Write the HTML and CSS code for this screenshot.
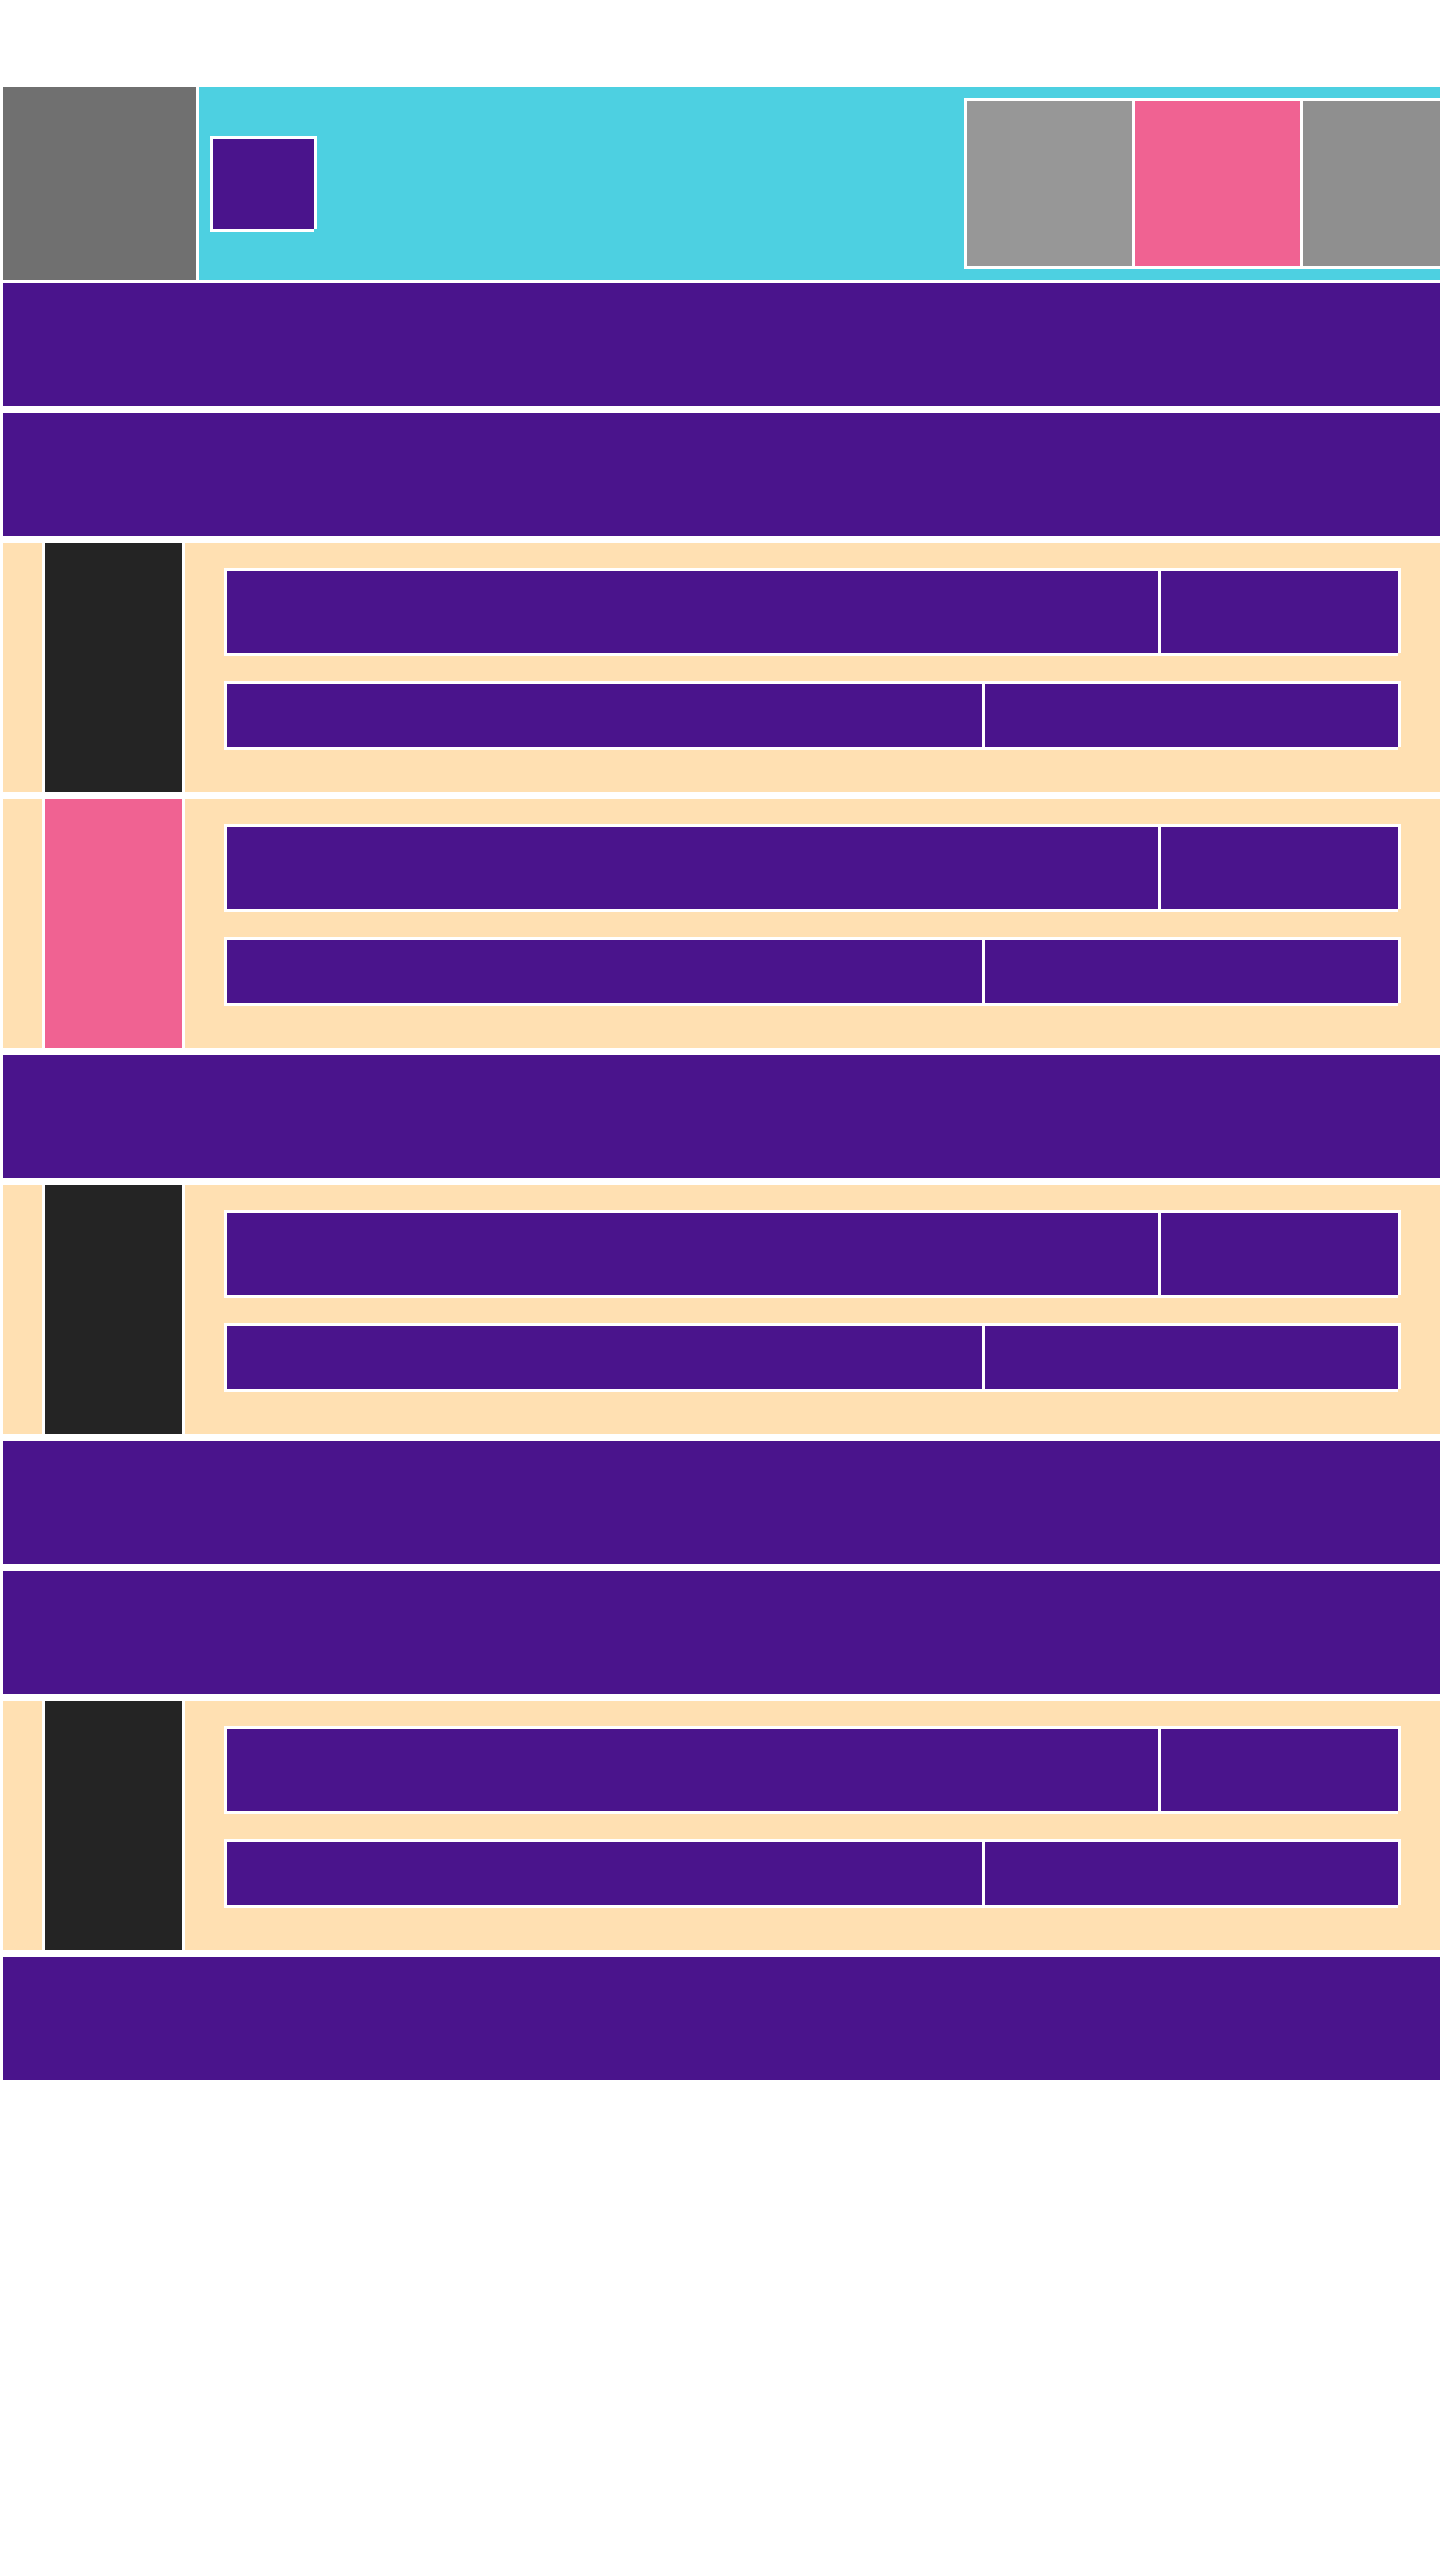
FILE: index.html
```html
<!DOCTYPE html>
<html lang="en">
<head>
<meta charset="utf-8">
<title>Layout</title>
<link rel="stylesheet" href="styles.css">
</head>
<body>
<div class="page">
  <header class="header">
    <div class="logo"></div>
    <div class="bar-top">
      <div class="brand framed"></div>
      <div class="tiles framed">
        <div class="tile tile-a"></div>
        <div class="tile tile-b"></div>
        <div class="tile tile-c"></div>
      </div>
    </div>
  </header>

  <section class="row band"></section>
  <section class="row band"></section>

  <section class="row card">
    <div class="card-edge"></div>
    <div class="card-media media-dark"></div>
    <div class="card-body">
      <div class="line line-1 framed"><div class="cell c-wide"></div><div class="cell c-narrow"></div></div>
      <div class="line line-2 framed"><div class="cell c-mid"></div><div class="cell c-rest"></div></div>
    </div>
  </section>

  <section class="row card">
    <div class="card-edge"></div>
    <div class="card-media media-pink"></div>
    <div class="card-body">
      <div class="line line-1 framed"><div class="cell c-wide"></div><div class="cell c-narrow"></div></div>
      <div class="line line-2 framed"><div class="cell c-mid"></div><div class="cell c-rest"></div></div>
    </div>
  </section>

  <section class="row band"></section>

  <section class="row card">
    <div class="card-edge"></div>
    <div class="card-media media-dark"></div>
    <div class="card-body">
      <div class="line line-1 framed"><div class="cell c-wide"></div><div class="cell c-narrow"></div></div>
      <div class="line line-2 framed"><div class="cell c-mid"></div><div class="cell c-rest"></div></div>
    </div>
  </section>

  <section class="row band"></section>
  <section class="row band"></section>

  <section class="row card">
    <div class="card-edge"></div>
    <div class="card-media media-dark"></div>
    <div class="card-body">
      <div class="line line-1 framed"><div class="cell c-wide"></div><div class="cell c-narrow"></div></div>
      <div class="line line-2 framed"><div class="cell c-mid"></div><div class="cell c-rest"></div></div>
    </div>
  </section>

  <section class="row band"></section>
</div>
</body>
</html>
```

FILE: styles.css
```css
html {
  overflow: hidden;
  background: #ffffff;
}

body {
  margin: 0;
  padding: 87px 0 0 3px;
  background: #ffffff;
  font-family: "Liberation Sans", Arial, sans-serif;
}

.page {
  width: 1479px;
  display: flex;
  flex-direction: column;
}

/* white frame with the bottom-right corner left open */
.framed {
  border-top: 3px solid #ffffff;
  border-left: 3px solid #ffffff;
  margin: 0 3px 3px 0;
  box-shadow: 3px 0 0 0 #ffffff, 0 3px 0 0 #ffffff;
}

.header {
  height: 193px;
  display: flex;
  gap: 3px;
}

.logo {
  width: 193px;
  height: 193px;
  flex: 0 0 193px;
  background: #707070;
}

.bar-top {
  flex: 1;
  background: #4dd0e1;
  padding: 0 11px;
  display: flex;
  align-items: center;
  justify-content: space-between;
}

.brand {
  width: 101px;
  height: 90px;
  background: #4a148c;
}

.tiles {
  display: flex;
  gap: 3px;
  background: #ffffff;
}

.tile {
  width: 165px;
  height: 165px;
}

.tile-a { background: #979797; }
.tile-b { background: #f06292; }
.tile-c { background: #8f8f8f; }

.row {
  margin-top: 7px;
}

.header + .row {
  margin-top: 3px;
}

.band {
  height: 123px;
  background: #4a148c;
}

.card {
  height: 249px;
  display: flex;
  gap: 3px;
}

.card-edge {
  flex: 0 0 39px;
  background: #ffe0b2;
}

.card-media {
  flex: 0 0 137px;
}

.media-dark { background: #242424; }
.media-pink { background: #f06292; }

.card-body {
  flex: 1;
  background: #ffe0b2;
  padding: 25px 0 0 39px;
  display: flex;
  flex-direction: column;
  align-items: flex-start;
  gap: 25px;
}

.line {
  width: 1171px;
  display: flex;
  gap: 3px;
  background: #ffffff;
}

.line-1 { height: 82px; }
.line-2 { height: 63px; }

.cell {
  background: #4a148c;
}

.c-wide { width: 931px; }
.c-narrow { flex: 1; }
.c-mid { width: 755px; }
.c-rest { flex: 1; }
```
